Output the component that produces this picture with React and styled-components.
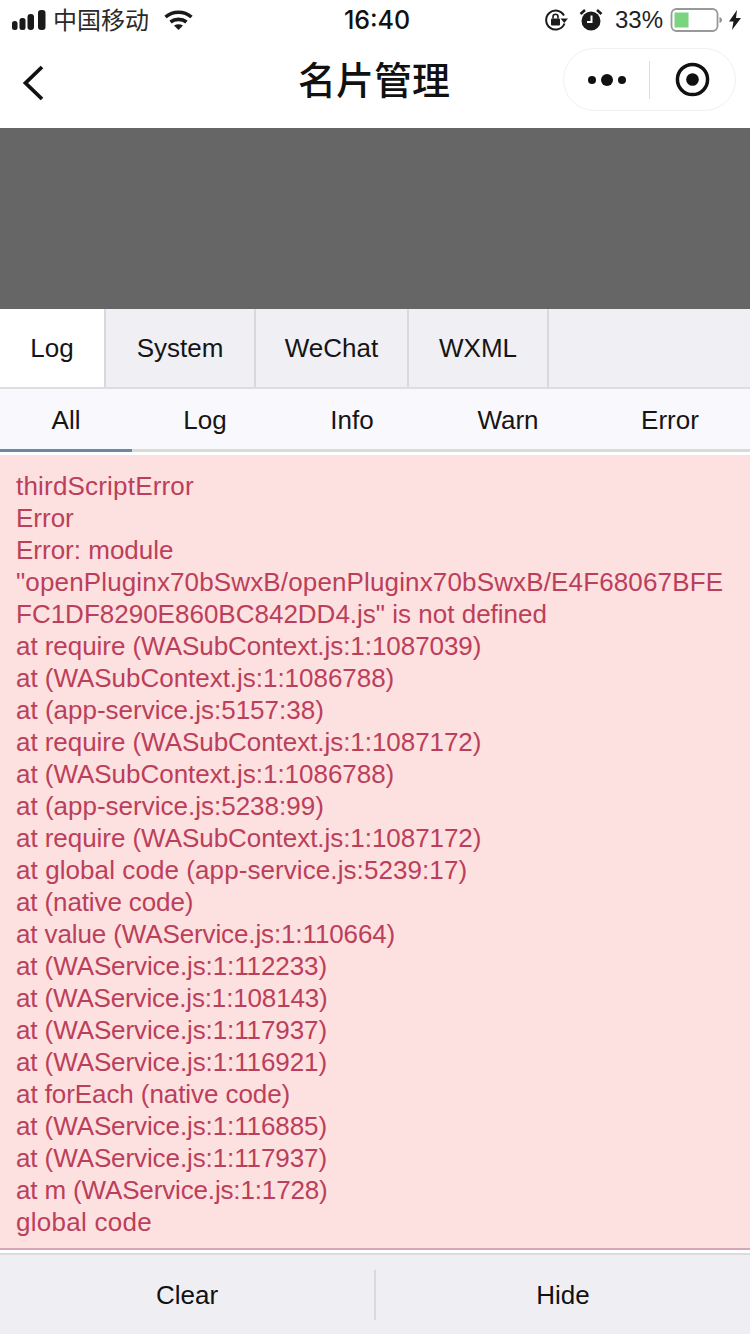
import React from "react";
import styled, { createGlobalStyle } from "styled-components";

const Global = createGlobalStyle`
  html, body { margin: 0; padding: 0; background: #fff; }
  body { font-family: "Liberation Sans", Arial, "Noto Sans CJK SC", sans-serif; }
  #root { width: 750px; height: 1334px; overflow: hidden; }
`;

const Page = styled.div`
  width: 750px;
  height: 1334px;
  display: flex;
  flex-direction: column;
  background: #fff;
  color: #111;
`;

const StatusBar = styled.div`
  height: 40px;
  box-sizing: border-box;
  display: flex;
  align-items: center;
  justify-content: space-between;
  padding: 0 9px 0 12px;
  position: relative;
`;

const StatusGroup = styled.div`
  display: flex;
  align-items: center;
`;

const Slot = styled.span`
  display: flex;
  margin-left: ${(p) => p.$ml || 0}px;
`;

const Carrier = styled.span`
  font-family: "Noto Sans CJK SC", sans-serif;
  font-size: 24px;
  line-height: 30px;
  padding-bottom: 3px;
  color: #2a2a2a;
  margin-left: 7px;
  margin-right: 15px;
`;

const Clock = styled.span`
  position: absolute;
  left: 0;
  right: 0;
  padding-left: 4px;
  text-align: center;
  font-size: 25px;
  font-weight: 500;
  font-family: Inter, "Liberation Sans", sans-serif;
`;

const Percent = styled.span`
  font-size: 24px;
  color: #222;
  margin-left: 12px;
  margin-right: 7px;
`;

const NavBar = styled.div`
  height: 88px;
  box-sizing: border-box;
  display: flex;
  align-items: center;
  justify-content: space-between;
  padding: 0 14px 2px 20px;
  position: relative;
`;

const Title = styled.div`
  position: absolute;
  left: 0;
  right: 2px;
  top: 11px;
  text-align: center;
  font-family: "Noto Sans CJK SC", sans-serif;
  font-size: 38px;
  line-height: 54px;
  font-weight: 500;
`;

const Capsule = styled.div`
  width: 173px;
  height: 63px;
  margin-bottom: 7px;
  border: 1px solid #f0f0f0;
  border-radius: 32px;
  display: flex;
  align-items: center;
  box-sizing: border-box;
`;

const CapsuleCell = styled.div`
  flex: 1;
  display: flex;
  align-items: center;
  justify-content: center;
`;

const CapsuleDivider = styled.div`
  width: 1px;
  height: 38px;
  background: #ddd;
`;

const Mask = styled.div`
  height: 181px;
  background: #666;
`;

const Tabs = styled.div`
  height: 80px;
  box-sizing: border-box;
  display: flex;
  background: #efeff4;
  border-bottom: 2px solid #dedee2;
`;

const Tab = styled.div`
  width: ${(p) => p.$w}px;
  background: ${(p) => (p.$active ? "#fff" : "transparent")};
  border-right: 2px solid #d9d9dc;
  box-sizing: border-box;
  display: flex;
  align-items: center;
  justify-content: center;
  font-size: 26px;
  padding-top: 1px;
  color: #151515;
`;

const Filters = styled.div`
  height: 60px;
  display: flex;
  background: #f9f9fd;
  border-bottom: 3px solid #d8dcd8;
`;

const Filter = styled.div`
  width: ${(p) => p.$w}px;
  height: 63px;
  margin-bottom: -3px;
  display: flex;
  align-items: center;
  justify-content: center;
  font-size: 26px;
  color: #151515;
  box-shadow: ${(p) => (p.$active ? "inset 0 -3px 0 #6e87a3" : "none")};
`;

const LogPanel = styled.div`
  margin-top: 3px;
  height: 795px;
  box-sizing: border-box;
  background: #fde0e0;
  padding: 15px 16px 0;
  color: #bb3f5a;
  font-size: 26px;
  line-height: 32px;
  border-bottom: 2px solid #d6a6b8;
`;

const LogLine = styled.div`
  white-space: nowrap;
  letter-spacing: ${(p) => p.$track}px;
`;

const Footer = styled.div`
  margin-top: 3px;
  flex: 1;
  display: flex;
  align-items: center;
  background: #efeff3;
  border-top: 2px solid #dcdcdf;
`;

const FooterButton = styled.div`
  flex: 1;
  text-align: center;
  font-size: 26px;
  padding-top: 1px;
  color: #111;
`;

const FooterDivider = styled.div`
  width: 2px;
  height: 50px;
  background: #d9d9dc;
`;

const lines = [
  ["thirdScriptError", 0.19],
  ["Error", 0],
  ["Error: module", 0],
  ['"openPluginx70bSwxB/openPluginx70bSwxB/E4F68067BFE', 0.14],
  ['FC1DF8290E860BC842DD4.js" is not defined', 0],
  ["at require (WASubContext.js:1:1087039)", -0.05],
  ["at (WASubContext.js:1:1086788)", -0.03],
  ["at (app-service.js:5157:38)", 0],
  ["at require (WASubContext.js:1:1087172)", -0.05],
  ["at (WASubContext.js:1:1086788)", -0.03],
  ["at (app-service.js:5238:99)", 0],
  ["at require (WASubContext.js:1:1087172)", -0.05],
  ["at global code (app-service.js:5239:17)", 0.08],
  ["at (native code)", -0.12],
  ["at value (WAService.js:1:110664)", -0.12],
  ["at (WAService.js:1:112233)", -0.1],
  ["at (WAService.js:1:108143)", -0.15],
  ["at (WAService.js:1:117937)", -0.1],
  ["at (WAService.js:1:116921)", -0.1],
  ["at forEach (native code)", -0.08],
  ["at (WAService.js:1:116885)", -0.1],
  ["at (WAService.js:1:117937)", -0.1],
  ["at m (WAService.js:1:1728)", -0.15],
  ["global code", 0.27],
];

const Signal = () => (
  <svg width="34" height="20" viewBox="0 0 34 20" fill="#1a1a1a">
    <rect x="0" y="11" width="5.500" height="9" rx="2.500" />
    <rect x="7.500" y="8" width="6" height="12" rx="2.500" />
    <rect x="15.500" y="4" width="6.500" height="16" rx="3" />
    <rect x="26" y="0" width="7.500" height="20" rx="3" />
  </svg>
);

const Wifi = () => (
  <svg width="29" height="20" viewBox="0 0 29 20" fill="none" stroke="#1a1a1a" strokeWidth="3.600">
    <path d="M1.500 7C9 .6 20 .6 27.500 7" />
    <path d="M6.500 12C11 8.500 18 8.500 22.500 12" />
    <path d="M10 15.500L14.500 20L19 15.500C16 13.700 13 13.700 10 15.500Z" fill="#1a1a1a" stroke="none" />
  </svg>
);

const RotationLock = () => (
  <svg width="24" height="24" viewBox="0 0 24 24" fill="none">
    <path d="M20.500 15.500A9.500 9.500 0 1 1 20 7.500" stroke="#1a1a1a" strokeWidth="2" />
    <path d="M16.500 10.500h7.500l-3.700 4.500z" fill="#1a1a1a" />
    <rect x="7" y="10.500" width="9" height="7" rx="1" fill="#1a1a1a" />
    <path d="M9 10.500V8.700a2.500 2.500 0 0 1 5 0v1.800" stroke="#1a1a1a" strokeWidth="1.600" />
  </svg>
);

const Alarm = () => (
  <svg width="24" height="24" viewBox="0 0 24 24">
    <circle cx="12" cy="13" r="9.500" fill="#1a1a1a" />
    <path d="M12.500 7.500v6.500H8" stroke="#fff" strokeWidth="2" fill="none" />
    <path d="M1.500 6L6 2M22.500 6L18 2" stroke="#1a1a1a" strokeWidth="2.600" />
  </svg>
);

const Battery = () => (
  <svg width="54" height="24" viewBox="0 0 54 24">
    <rect x="1.500" y="1" width="46" height="22" rx="5" fill="#fff" stroke="#999" strokeWidth="1.800" />
    <rect x="4.500" y="4.500" width="14" height="15" fill="#7bd480" />
    <path d="M49.500 9v6c1.500-.5 2.500-1.500 2.500-3s-1-2.500-2.500-3z" fill="#8f8f8f" />
  </svg>
);

const Bolt = () => (
  <svg width="12" height="20" viewBox="0 0 12 20" fill="#1a1a1a">
    <path d="M8 0L0 11.500h4.500L3 20l9-12H7z" />
  </svg>
);

const Back = () => (
  <svg width="28" height="36" viewBox="0 0 28 36" fill="none" stroke="#111" strokeWidth="3.800">
    <path d="M22 2L5.500 18L22 34" />
  </svg>
);

const Dots = () => (
  <svg width="38" height="14" viewBox="0 0 38 14" fill="#111">
    <circle cx="4" cy="7" r="4" />
    <circle cx="19" cy="7" r="6" />
    <circle cx="34" cy="7" r="4" />
  </svg>
);

const Target = () => (
  <svg width="35" height="35" viewBox="0 0 36 36">
    <circle cx="18" cy="18" r="15.500" fill="none" stroke="#111" strokeWidth="3.600" />
    <circle cx="18" cy="18" r="6.500" fill="#111" />
  </svg>
);

export default function App() {
  return (
    <Page>
      <Global />
      <StatusBar>
        <StatusGroup>
          <Signal />
          <Carrier>中国移动</Carrier>
          <Wifi />
        </StatusGroup>
        <Clock>16:40</Clock>
        <StatusGroup>
          <RotationLock />
          <Slot $ml={11}><Alarm /></Slot>
          <Percent>33%</Percent>
          <Battery />
          <Slot $ml={5}><Bolt /></Slot>
        </StatusGroup>
      </StatusBar>
      <NavBar>
        <Back />
        <Title>名片管理</Title>
        <Capsule>
          <CapsuleCell><Dots /></CapsuleCell>
          <CapsuleDivider />
          <CapsuleCell><Target /></CapsuleCell>
        </Capsule>
      </NavBar>
      <Mask />
      <Tabs>
        <Tab $w={106} $active>Log</Tab>
        <Tab $w={150}>System</Tab>
        <Tab $w={153}>WeChat</Tab>
        <Tab $w={140}>WXML</Tab>
      </Tabs>
      <Filters>
        <Filter $w={132} $active>All</Filter>
        <Filter $w={146}>Log</Filter>
        <Filter $w={148}>Info</Filter>
        <Filter $w={164}>Warn</Filter>
        <Filter $w={160}>Error</Filter>
      </Filters>
      <LogPanel>
        {lines.map(([text, track], i) => (
          <LogLine key={i} $track={track}>{text}</LogLine>
        ))}
      </LogPanel>
      <Footer>
        <FooterButton>Clear</FooterButton>
        <FooterDivider />
        <FooterButton>Hide</FooterButton>
      </Footer>
    </Page>
  );
}
